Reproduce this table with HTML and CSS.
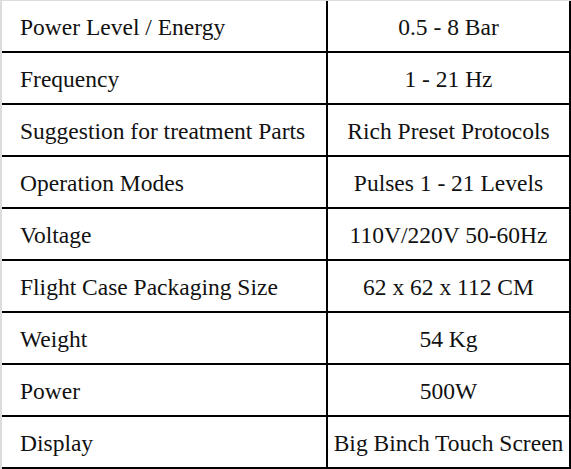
FILE: index.html
```html
<!DOCTYPE html>
<html>
<head>
<meta charset="utf-8">
<link rel="stylesheet" href="styles.css">
</head>
<body>
<div class="frame">
  <div class="grid">
    <div class="cell key">Power Level / Energy</div><div class="cell val">0.5 - 8 Bar</div>
    <div class="cell key">Frequency</div><div class="cell val">1 - 21 Hz</div>
    <div class="cell key">Suggestion for treatment Parts</div><div class="cell val">Rich Preset Protocols</div>
    <div class="cell key">Operation Modes</div><div class="cell val">Pulses 1 - 21 Levels</div>
    <div class="cell key">Voltage</div><div class="cell val">110V/220V 50-60Hz</div>
    <div class="cell key">Flight Case Packaging Size</div><div class="cell val">62 x 62 x 112 CM</div>
    <div class="cell key">Weight</div><div class="cell val">54 Kg</div>
    <div class="cell key">Power</div><div class="cell val">500W</div>
    <div class="cell key">Display</div><div class="cell val">Big Binch Touch Screen</div>
  </div>
</div>
</body>
</html>
```
FILE: styles.css
```css
html, body {
  margin: 0;
  padding: 0;
  background: #ffffff;
}
.frame {
  width: 571px;
  height: 469px;
  box-sizing: border-box;
  border-top: 1px solid #dcdcdc;
  border-left: 2px solid #dcdcdc;
}
.grid {
  display: grid;
  grid-template-columns: 326px 243px;
  grid-auto-rows: 52px;
}
.cell {
  box-sizing: border-box;
  display: flex;
  align-items: center;
  border-bottom: 2px solid #000;
  border-right: 2px solid #000;
  font-family: "Liberation Serif", "DejaVu Serif", serif;
  font-size: 23.5px;
  color: #111;
  padding-top: 3px;
}
.key {
  padding-left: 18px;
}
.val {
  justify-content: center;
}
```
